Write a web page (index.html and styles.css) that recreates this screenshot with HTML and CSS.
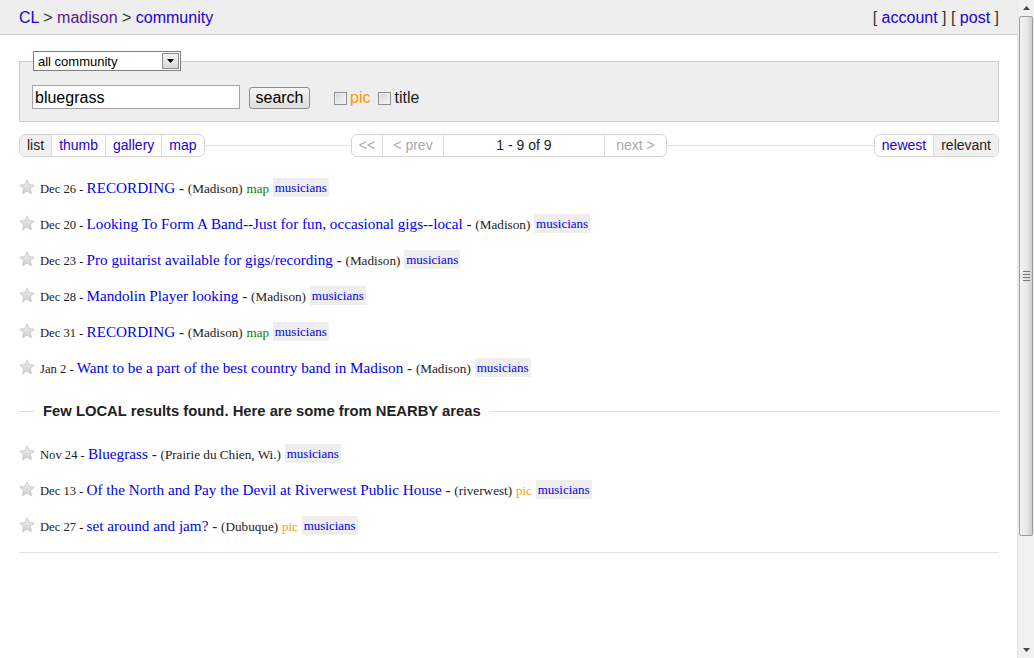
FILE: index.html
```html
<!DOCTYPE html>
<html>
<head>
<meta charset="utf-8">
<title>madison community "bluegrass" - craigslist</title>
<link rel="stylesheet" href="styles.css">
</head>
<body>
<div class="window">
  <div class="main">
    <header class="topbar">
      <div class="crumbs">
        <a class="lnk" href="#">CL</a> &gt; <a class="lnk visited" href="#">madison</a> &gt; <a class="lnk" href="#">community</a>
      </div>
      <div class="userlinks">[ <a class="lnk" href="#">account</a> ] [ <a class="lnk" href="#">post</a> ]</div>
    </header>

    <div class="content">
      <fieldset class="searchbox">
        <legend class="catlegend">
          <div class="fakeselect"><span class="seltext">all community</span><span class="selarrow"><svg width="7" height="4" viewBox="0 0 7 4"><path d="M0 0H7L3.5 4Z" fill="#000"/></svg></span></div>
        </legend>
        <div class="searchrow">
          <input class="query" type="text" value="bluegrass">
          <button class="searchbtn" type="button">search</button>
          <label class="chk"><input type="checkbox" class="box"><span class="pic">pic</span></label>
          <label class="chk"><input type="checkbox" class="box"><span class="ttl">title</span></label>
        </div>
      </fieldset>

      <div class="navrow">
        <div class="navcol left">
          <div class="btngroup">
            <span class="btn sel">list</span><a class="btn lnk" href="#">thumb</a><a class="btn lnk" href="#">gallery</a><a class="btn lnk" href="#">map</a>
          </div>
          <div class="rule"></div>
        </div>
        <div class="btngroup pager">
          <span class="btn dis first">&lt;&lt;</span><span class="btn dis prev">&lt; prev</span><span class="btn range">1 - 9 of 9</span><span class="btn dis next">next &gt;</span>
        </div>
        <div class="navcol right">
          <div class="rule"></div>
          <div class="btngroup">
            <a class="btn lnk" href="#">newest</a><span class="btn sel">relevant</span>
          </div>
        </div>
      </div>

      <ul class="results">
        <li class="row"><svg class="star" width="16" height="16" viewBox="0 0 16 16"><use href="#starshape"/></svg><span class="date">Dec 26 - </span><a class="title" href="#">RECORDING</a> - <span class="hood">(Madison)</span> <span class="map">map</span> <a class="tag" href="#">musicians</a></li>
        <li class="row"><svg class="star" width="16" height="16" viewBox="0 0 16 16"><use href="#starshape"/></svg><span class="date">Dec 20 - </span><a class="title" href="#">Looking To Form A Band--Just for fun, occasional gigs--local</a> - <span class="hood">(Madison)</span> <a class="tag" href="#">musicians</a></li>
        <li class="row"><svg class="star" width="16" height="16" viewBox="0 0 16 16"><use href="#starshape"/></svg><span class="date">Dec 23 - </span><a class="title" href="#">Pro guitarist available for gigs/recording</a> - <span class="hood">(Madison)</span> <a class="tag" href="#">musicians</a></li>
        <li class="row"><svg class="star" width="16" height="16" viewBox="0 0 16 16"><use href="#starshape"/></svg><span class="date">Dec 28 - </span><a class="title" href="#">Mandolin Player looking</a> - <span class="hood">(Madison)</span> <a class="tag" href="#">musicians</a></li>
        <li class="row"><svg class="star" width="16" height="16" viewBox="0 0 16 16"><use href="#starshape"/></svg><span class="date">Dec 31 - </span><a class="title" href="#">RECORDING</a> - <span class="hood">(Madison)</span> <span class="map">map</span> <a class="tag" href="#">musicians</a></li>
        <li class="row"><svg class="star" width="16" height="16" viewBox="0 0 16 16"><use href="#starshape"/></svg><span class="date">Jan 2 - </span><a class="title" href="#">Want to be a part of the best country band in Madison</a> - <span class="hood">(Madison)</span> <a class="tag" href="#">musicians</a></li>
      </ul>

      <h4 class="nearby"><span class="nline short"></span><span class="ntext">Few LOCAL results found. Here are some from NEARBY areas</span><span class="nline"></span></h4>

      <ul class="results last">
        <li class="row"><svg class="star" width="16" height="16" viewBox="0 0 16 16"><use href="#starshape"/></svg><span class="date">Nov 24 - </span><a class="title" href="#">Bluegrass</a> - <span class="hood">(Prairie du Chien, Wi.)</span> <a class="tag" href="#">musicians</a></li>
        <li class="row"><svg class="star" width="16" height="16" viewBox="0 0 16 16"><use href="#starshape"/></svg><span class="date">Dec 13 - </span><a class="title" href="#">Of the North and Pay the Devil at Riverwest Public House</a> - <span class="hood">(riverwest)</span> <span class="picflag">pic</span> <a class="tag" href="#">musicians</a></li>
        <li class="row"><svg class="star" width="16" height="16" viewBox="0 0 16 16"><use href="#starshape"/></svg><span class="date">Dec 27 - </span><a class="title" href="#">set around and jam?</a> - <span class="hood">(Dubuque)</span> <span class="picflag">pic</span> <a class="tag" href="#">musicians</a></li>
      </ul>
    </div>
  </div>

  <div class="scrollbar">
    <div class="sb-arrow"><svg width="7" height="4" viewBox="0 0 7 4"><path d="M0 4H7L3.5 0Z" fill="#444"/></svg></div>
    <div class="sb-track">
      <div class="sb-thumb"><span class="grip"></span><span class="grip"></span><span class="grip"></span><span class="grip"></span></div>
    </div>
    <div class="sb-arrow"><svg width="7" height="4" viewBox="0 0 7 4"><path d="M0 0H7L3.5 4Z" fill="#444"/></svg></div>
  </div>
</div>

<svg class="defs" width="0" height="0">
  <defs>
    <linearGradient id="stargrad" x1="0" y1="0" x2="0" y2="1">
      <stop offset="0" stop-color="#f0f0f0"/>
      <stop offset="1" stop-color="#cdcdcd"/>
    </linearGradient>
    <symbol id="starshape" viewBox="0 0 16 16">
      <polygon points="8,0.8 10.1,5.6 15.3,6.1 11.4,9.6 12.5,14.8 8,12.1 3.5,14.8 4.6,9.6 0.7,6.1 5.9,5.6" fill="url(#stargrad)" stroke="#c4c4c4" stroke-width="0.8" stroke-linejoin="round"/>
    </symbol>
  </defs>
</svg>
</body>
</html>
```

FILE: styles.css
```css
html, body {
  margin: 0;
  padding: 0;
  background: #fff;
}

body {
  font-family: "Liberation Sans", Arial, sans-serif;
  color: #222;
}

.window {
  display: flex;
  height: 658px;
  overflow: hidden;
}

.main {
  flex: 1;
  min-width: 0;
}

.lnk {
  color: #2200cc;
  text-decoration: none;
}

.lnk.visited {
  color: #551a8b;
}

/* header */
.topbar {
  box-sizing: border-box;
  height: 35px;
  display: flex;
  align-items: center;
  justify-content: space-between;
  padding: 1px 18px 0 19px;
  background: #eee;
  border-bottom: 1px solid #ccc;
  font-size: 16px;
  color: #333;
}

.content {
  padding: 16px 18px 0 19px;
}

/* search fieldset */
.searchbox {
  margin: 0;
  padding: 0 12px 12px 12px;
  border: 1px solid #ccc;
  background: #eee;
}

.catlegend {
  padding: 0;
  margin-left: 1px;
}

.fakeselect {
  display: flex;
  align-items: center;
  width: 146px;
  height: 18px;
  border: 1px solid #7f7f7f;
  background: #fff;
  font-size: 13px;
  color: #000;
}

.seltext {
  flex: 1;
  padding-left: 4px;
}

.selarrow {
  width: 15px;
  height: 14px;
  margin-right: 1px;
  border: 1px solid #8a8a8a;
  background: linear-gradient(#f6f6f6, #d8d8d8);
  display: flex;
  align-items: center;
  justify-content: center;
}

.searchrow {
  display: flex;
  align-items: center;
  margin-top: 14px;
  height: 24px;
  font-size: 16px;
}

.query {
  box-sizing: border-box;
  width: 208px;
  height: 24px;
  margin: 0;
  padding: 1px 2px 0;
  border: 1px solid #a5a5a5;
  font-family: "Liberation Sans", Arial, sans-serif;
  font-size: 16px;
  color: #000;
  background: #fff;
}

.searchbtn {
  box-sizing: border-box;
  margin: 1px 0 0 9px;
  width: 61px;
  height: 22px;
  padding: 1px 0 0;
  border: 1px solid #8c8c8c;
  border-radius: 3px;
  background: linear-gradient(#f6f6f6, #dedede);
  font-family: "Liberation Sans", Arial, sans-serif;
  font-size: 16px;
  color: #000;
}

.chk {
  display: flex;
  align-items: center;
  margin-left: 24px;
  padding-top: 2px;
}

.chk + .chk {
  margin-left: 8px;
}

.box {
  appearance: none;
  -webkit-appearance: none;
  box-sizing: border-box;
  width: 13px;
  height: 13px;
  margin: 0 3px 0 0;
  border: 1px solid #8f8f8f;
  background: linear-gradient(135deg, #d6d6d6, #f6f6f6);
  box-shadow: inset 0 0 0 1px #f0f0f0;
}

.pic {
  color: #ff9900;
}

.ttl {
  color: #222;
}

/* nav row */
.navrow {
  display: grid;
  grid-template-columns: 1fr auto 1fr;
  align-items: center;
  margin-top: 12px;
  font-size: 14px;
}

.navcol {
  display: flex;
  align-items: center;
}

.rule {
  flex: 1;
  height: 1px;
  background: #e2e2e2;
}

.btngroup {
  display: flex;
  height: 21px;
  border: 1px solid #d4d4d4;
  border-radius: 6px;
  overflow: hidden;
  background: #fff;
}

.btn {
  display: flex;
  align-items: center;
  justify-content: center;
  padding: 0 7px;
  border-left: 1px solid #dcdcdc;
  line-height: 21px;
}

.btn:first-child {
  border-left: none;
}

.btn.sel {
  background: #f0f0f0;
  color: #222;
}

.btn.dis {
  color: #aaa;
}

.pager .first { width: 30px; padding: 0; }
.pager .prev { width: 60px; padding: 0; }
.pager .range { width: 160px; padding: 0; color: #222; }
.pager .next { width: 61px; padding: 0; }

/* results */
.results {
  list-style: none;
  margin: 13px 0 0 0;
  padding: 0;
}

.row {
  height: 36px;
  line-height: 36px;
  font-family: "Liberation Serif", "Times New Roman", serif;
  font-size: 15.2px;
  color: #222;
  white-space: nowrap;
}

.star {
  vertical-align: -2px;
  margin-right: 5px;
}

.date {
  font-size: 12.6px;
  color: #222;
}

.title {
  color: #0000ee;
  text-decoration: none;
  font-size: 15.2px;
}

.hood {
  font-size: 13.2px;
  color: #222;
}

.map {
  font-size: 13px;
  color: #008000;
}

.picflag {
  font-size: 13px;
  color: #ff9900;
}

.tag {
  display: inline-block;
  line-height: 19px;
  padding: 0 2px;
  background: #eee;
  color: #0000ee;
  text-decoration: none;
  font-size: 13px;
  vertical-align: 1px;
}

.nearby {
  display: flex;
  align-items: center;
  margin: 15px 0 15px 0;
  height: 20px;
  font-size: 14.8px;
  font-weight: bold;
  color: #222;
}

.nline {
  flex: 1;
  height: 1px;
  background: #dedede;
}

.nline.short {
  flex: 0 0 16px;
}

.ntext {
  padding: 0 9px 0 8px;
}

.results.last {
  margin-top: 0;
  padding-bottom: 8px;
  border-bottom: 1px solid #e2e2e2;
}

/* fake window scrollbar */
.scrollbar {
  width: 17px;
  flex: 0 0 17px;
  height: 658px;
  display: flex;
  flex-direction: column;
  background: #f0f0f0;
  border-left: 1px solid #e6e6e6;
  box-sizing: border-box;
}

.sb-arrow {
  height: 16px;
  display: flex;
  align-items: center;
  justify-content: center;
}

.sb-track {
  flex: 1;
  padding: 0 1px;
}

.sb-thumb {
  box-sizing: border-box;
  height: 520px;
  border: 1px solid #9a9a9a;
  border-radius: 2px;
  background: linear-gradient(90deg, #f4f4f4, #e6e6e6 60%, #cfcfcf);
  display: flex;
  flex-direction: column;
  justify-content: center;
  align-items: center;
  gap: 2px;
}

.grip {
  width: 7px;
  height: 1px;
  background: #777;
}

.defs {
  position: absolute;
  width: 0;
  height: 0;
}
```
